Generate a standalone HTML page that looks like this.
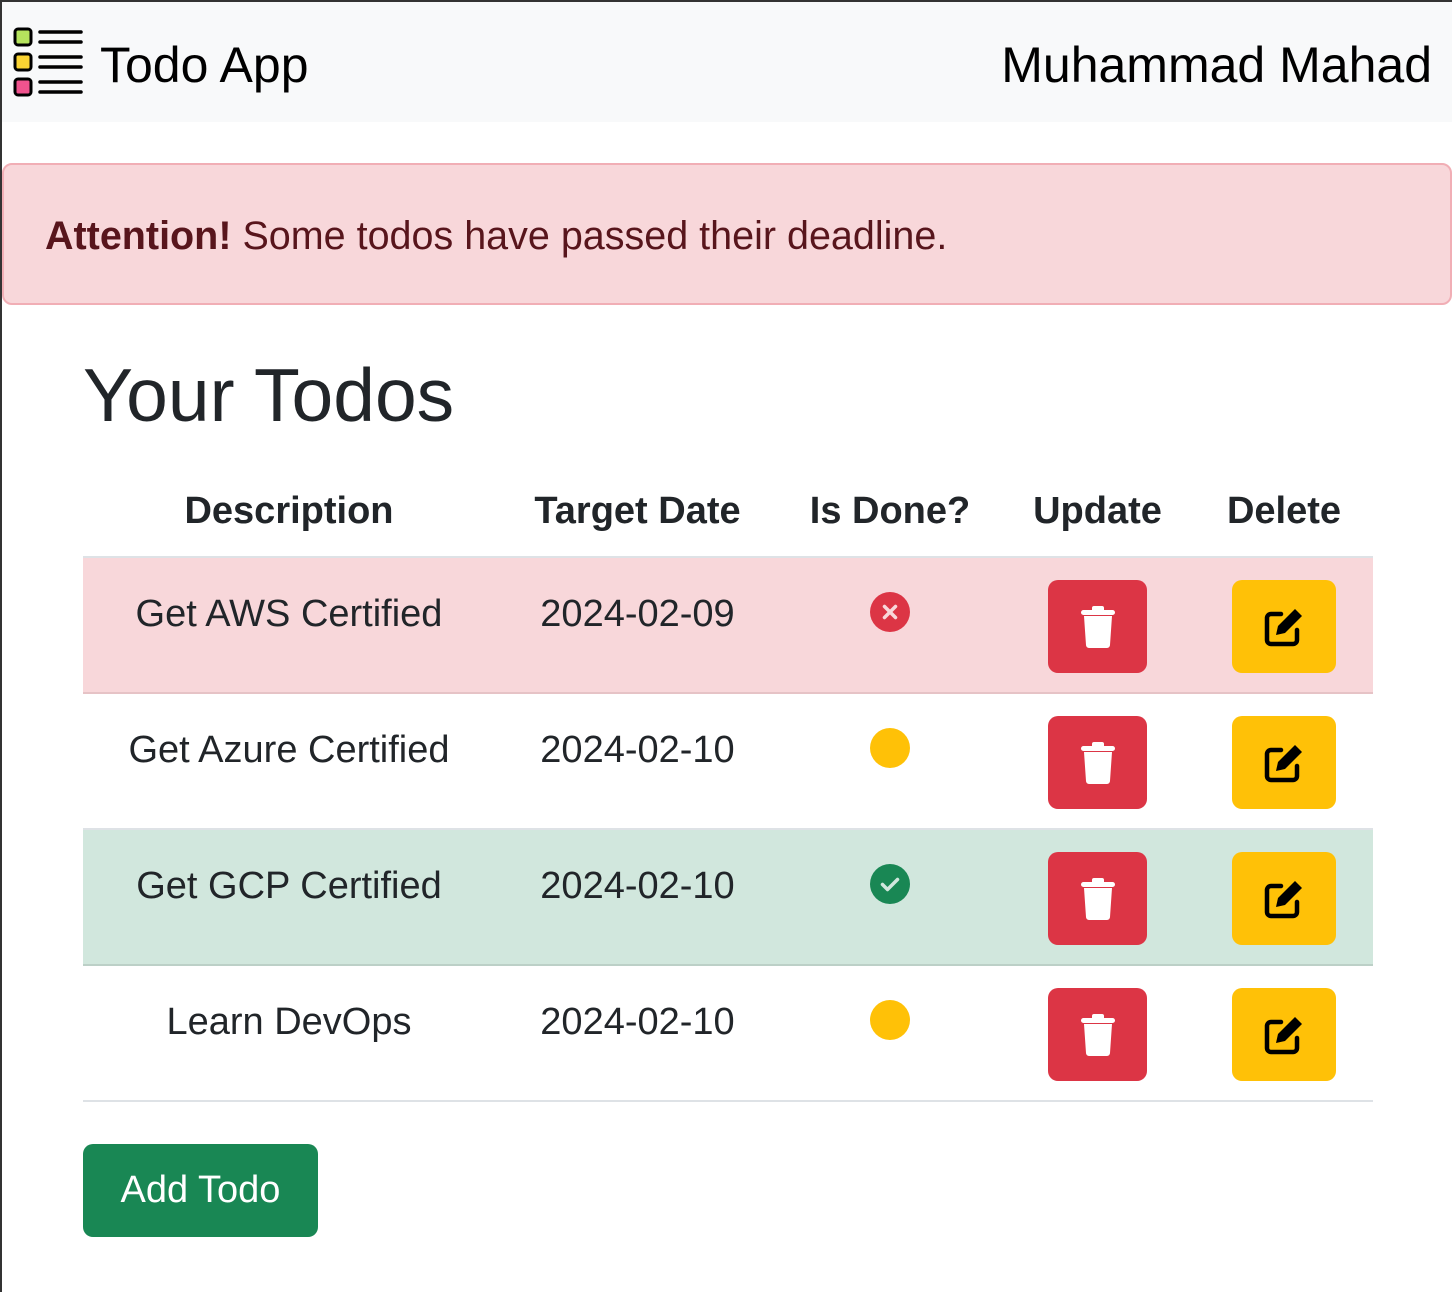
<!DOCTYPE html>
<html><head><style>
*{box-sizing:border-box;margin:0;padding:0}
body{width:1452px;height:1292px;background:#fff;font-family:"Liberation Sans",sans-serif;color:#212529;position:relative;overflow:hidden}
.bt{position:absolute;left:0;top:0;width:1452px;height:2px;background:#333;z-index:5}
.bl{position:absolute;left:0;top:0;width:2px;height:1292px;background:#333;z-index:5}
.nav{position:absolute;left:0;top:0;width:1452px;height:122px;background:#f8f9fa}
.brand{position:absolute;left:100px;top:36px;font-size:50px;color:#000}
.user{position:absolute;right:20px;top:36px;font-size:50px;color:#000}
.alert{position:absolute;left:2px;top:163px;width:1450px;height:142px;background:#f8d7da;border:2px solid #f1aeb5;border-radius:10px;color:#58151c;font-size:39.5px;padding:49px 0 0 41px}
h1{position:absolute;left:83px;top:352px;font-size:75px;font-weight:400}
.row{position:absolute;left:83px;width:1290px;height:136px;border-bottom:2px solid #dee2e6}
.c{position:absolute;font-size:38px;text-align:center;top:35px}
.hd{font-weight:bold;top:10px}
.btn{position:absolute;top:22px;height:93px;border-radius:10px}
.del{left:965px;width:99px;background:#dc3545}
.ed{left:1149px;width:104px;background:#ffc107}
.btn svg{position:absolute;left:50%;top:50%;transform:translate(-50%,-50%)}
.st{position:absolute;left:787px;top:34px;width:40px;height:40px;border-radius:50%}
</style></head><body>
<div class="bt"></div><div class="bl"></div>
<div class="nav">
<svg style="position:absolute;left:12px;top:26px" width="74" height="72" viewBox="0 0 74 72">
<rect x="3" y="3" width="16" height="16" rx="3" fill="#b5e35d" stroke="#000" stroke-width="3"/>
<rect x="3" y="28" width="16" height="16" rx="3" fill="#fbd433" stroke="#000" stroke-width="3"/>
<rect x="3" y="53" width="16" height="16" rx="3" fill="#f0538e" stroke="#000" stroke-width="3"/>
<g stroke="#000" stroke-width="3.5" stroke-linecap="round">
<line x1="28" y1="6" x2="69" y2="6"/><line x1="28" y1="16" x2="69" y2="16"/>
<line x1="28" y1="31" x2="69" y2="31"/><line x1="28" y1="41" x2="69" y2="41"/>
<line x1="28" y1="56" x2="69" y2="56"/><line x1="28" y1="66" x2="69" y2="66"/></g></svg>
<div class="brand">Todo App</div>
<div class="user">Muhammad Mahad</div>
</div>
<div class="alert"><b>Attention!</b> Some todos have passed their deadline.</div>
<h1>Your Todos</h1>
<div class="row" style="top:480px;height:78px;border-bottom:2px solid #dee2e6">
<div class="c hd" style="left:0;width:412px">Description</div>
<div class="c hd" style="left:412px;width:285px">Target Date</div>
<div class="c hd" style="left:697px;width:220px">Is Done?</div>
<div class="c hd" style="left:917px;width:195px">Update</div>
<div class="c hd" style="left:1112px;width:178px">Delete</div>
</div>

<div class="row" style="top:558px;background:#f8d7da;border-bottom-color:#e6c3c6">
<div class="c" style="left:0;width:412px">Get AWS Certified</div>
<div class="c" style="left:412px;width:285px">2024-02-09</div>
<div class="st" style="background:#dc3545"><svg width="40" height="40"><path d="M14.5 14.5l11 11M25.5 14.5l-11 11" stroke="#f8d7da" stroke-width="3.5" stroke-linecap="round"/></svg></div>
<div class="btn del"><svg width="36" height="42" viewBox="0 0 36 42"><rect x="1" y="4" width="34" height="5" rx="2.5" fill="#fff"/><rect x="12" y="0" width="12" height="6" rx="2" fill="#fff"/><path d="M4 10h28l-2 29a3 3 0 0 1-3 3H9a3 3 0 0 1-3-3z" fill="#fff"/></svg></div>
<div class="btn ed"><svg width="42" height="42" viewBox="0 0 42 42"><path d="M18 8H8a4 4 0 0 0-4 4v22a4 4 0 0 0 4 4h22a4 4 0 0 0 4-4V24" fill="none" stroke="#000" stroke-width="4.5" stroke-linecap="round"/><path d="M32 3l7 7-17 17-9 2 2-9z" fill="#000"/></svg></div>
</div>

<div class="row" style="top:694px">
<div class="c" style="left:0;width:412px">Get Azure Certified</div>
<div class="c" style="left:412px;width:285px">2024-02-10</div>
<div class="st" style="background:#ffc107"></div>
<div class="btn del"><svg width="36" height="42" viewBox="0 0 36 42"><rect x="1" y="4" width="34" height="5" rx="2.5" fill="#fff"/><rect x="12" y="0" width="12" height="6" rx="2" fill="#fff"/><path d="M4 10h28l-2 29a3 3 0 0 1-3 3H9a3 3 0 0 1-3-3z" fill="#fff"/></svg></div>
<div class="btn ed"><svg width="42" height="42" viewBox="0 0 42 42"><path d="M18 8H8a4 4 0 0 0-4 4v22a4 4 0 0 0 4 4h22a4 4 0 0 0 4-4V24" fill="none" stroke="#000" stroke-width="4.5" stroke-linecap="round"/><path d="M32 3l7 7-17 17-9 2 2-9z" fill="#000"/></svg></div>
</div>

<div class="row" style="top:830px;background:#d1e7dd;border-bottom-color:#bcd0c7">
<div class="c" style="left:0;width:412px">Get GCP Certified</div>
<div class="c" style="left:412px;width:285px">2024-02-10</div>
<div class="st" style="background:#198754"><svg width="40" height="40"><path d="M12.5 20.5l5 5 10-10" fill="none" stroke="#d1e7dd" stroke-width="3.5" stroke-linecap="round" stroke-linejoin="round"/></svg></div>
<div class="btn del"><svg width="36" height="42" viewBox="0 0 36 42"><rect x="1" y="4" width="34" height="5" rx="2.5" fill="#fff"/><rect x="12" y="0" width="12" height="6" rx="2" fill="#fff"/><path d="M4 10h28l-2 29a3 3 0 0 1-3 3H9a3 3 0 0 1-3-3z" fill="#fff"/></svg></div>
<div class="btn ed"><svg width="42" height="42" viewBox="0 0 42 42"><path d="M18 8H8a4 4 0 0 0-4 4v22a4 4 0 0 0 4 4h22a4 4 0 0 0 4-4V24" fill="none" stroke="#000" stroke-width="4.5" stroke-linecap="round"/><path d="M32 3l7 7-17 17-9 2 2-9z" fill="#000"/></svg></div>
</div>

<div class="row" style="top:966px">
<div class="c" style="left:0;width:412px">Learn DevOps</div>
<div class="c" style="left:412px;width:285px">2024-02-10</div>
<div class="st" style="background:#ffc107"></div>
<div class="btn del"><svg width="36" height="42" viewBox="0 0 36 42"><rect x="1" y="4" width="34" height="5" rx="2.5" fill="#fff"/><rect x="12" y="0" width="12" height="6" rx="2" fill="#fff"/><path d="M4 10h28l-2 29a3 3 0 0 1-3 3H9a3 3 0 0 1-3-3z" fill="#fff"/></svg></div>
<div class="btn ed"><svg width="42" height="42" viewBox="0 0 42 42"><path d="M18 8H8a4 4 0 0 0-4 4v22a4 4 0 0 0 4 4h22a4 4 0 0 0 4-4V24" fill="none" stroke="#000" stroke-width="4.5" stroke-linecap="round"/><path d="M32 3l7 7-17 17-9 2 2-9z" fill="#000"/></svg></div>
</div>

<div style="position:absolute;left:83px;top:1144px;width:235px;height:93px;background:#198754;border-radius:10px;color:#fff;font-size:38px;text-align:center;line-height:93px">Add Todo</div>
</body></html>
